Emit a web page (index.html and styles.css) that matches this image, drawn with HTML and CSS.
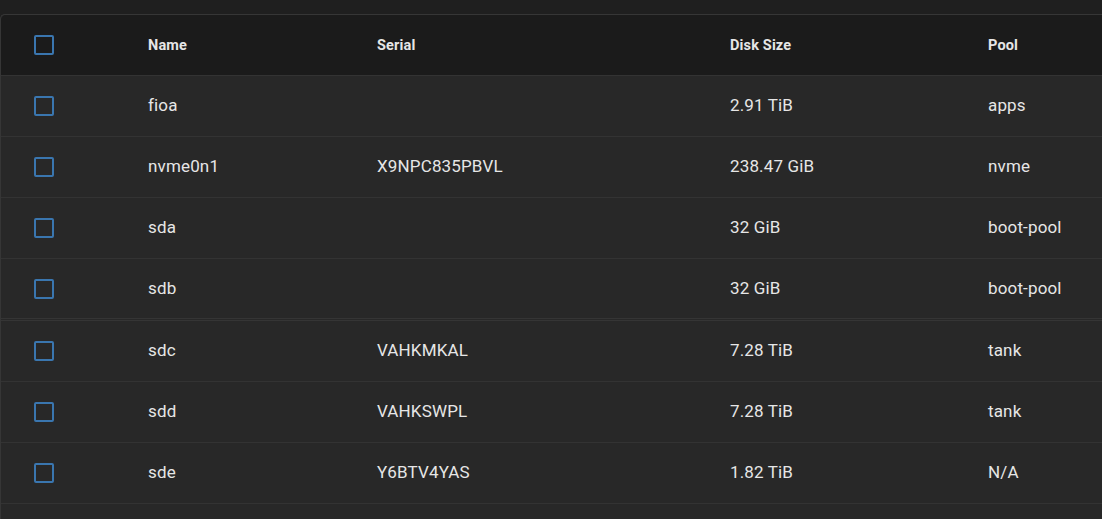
FILE: index.html
```html
<!DOCTYPE html>
<html>
<head>
<meta charset="utf-8">
<link rel="stylesheet" href="styles.css">
</head>
<body>
<div class="table">
  <div class="row head">
    <div class="cell check"><span class="box"></span></div>
    <div class="cell">Name</div>
    <div class="cell">Serial</div>
    <div class="cell">Disk Size</div>
    <div class="cell">Pool</div>
  </div>
  <div class="row">
    <div class="cell check"><span class="box"></span></div>
    <div class="cell">fioa</div>
    <div class="cell"></div>
    <div class="cell">2.91 TiB</div>
    <div class="cell">apps</div>
  </div>
  <div class="row">
    <div class="cell check"><span class="box"></span></div>
    <div class="cell">nvme0n1</div>
    <div class="cell">X9NPC835PBVL</div>
    <div class="cell">238.47 GiB</div>
    <div class="cell">nvme</div>
  </div>
  <div class="row">
    <div class="cell check"><span class="box"></span></div>
    <div class="cell">sda</div>
    <div class="cell"></div>
    <div class="cell">32 GiB</div>
    <div class="cell">boot-pool</div>
  </div>
  <div class="row split">
    <div class="cell check"><span class="box"></span></div>
    <div class="cell">sdb</div>
    <div class="cell"></div>
    <div class="cell">32 GiB</div>
    <div class="cell">boot-pool</div>
  </div>
  <div class="row">
    <div class="cell check"><span class="box"></span></div>
    <div class="cell">sdc</div>
    <div class="cell">VAHKMKAL</div>
    <div class="cell">7.28 TiB</div>
    <div class="cell">tank</div>
  </div>
  <div class="row">
    <div class="cell check"><span class="box"></span></div>
    <div class="cell">sdd</div>
    <div class="cell">VAHKSWPL</div>
    <div class="cell">7.28 TiB</div>
    <div class="cell">tank</div>
  </div>
  <div class="row">
    <div class="cell check"><span class="box"></span></div>
    <div class="cell">sde</div>
    <div class="cell">Y6BTV4YAS</div>
    <div class="cell">1.82 TiB</div>
    <div class="cell">N/A</div>
  </div>
</div>
</body>
</html>
```
FILE: styles.css
```css
html, body {
  margin: 0;
  padding: 0;
  background: #1f1f1f;
  font-family: Roboto, "Liberation Sans", sans-serif;
  color: #e6e6e6;
  overflow: hidden;
}
.table {
  margin-top: 14px;
  border-top: 1px solid #363636;
  border-left: 1px solid #363636;
  border-radius: 5px 0 0 0;
  background: #282828;
  height: 520px;
}
.row {
  display: grid;
  grid-template-columns: 147px 229px 353px 258px 1fr;
  height: 60px;
  align-items: center;
  border-bottom: 1px solid #333333;
  font-size: 17px;
  letter-spacing: 0.15px;
}
.row > .cell {
  padding-bottom: 2px;
}
.row.head {
  background: #1b1b1b;
  font-size: 14.5px;
  font-weight: 700;
  border-radius: 5px 0 0 0;
}
.row.head > .cell {
  padding-bottom: 0;
}
.row.split {
  height: 59px;
  border-bottom: 3px double #353535;
}
.row > .cell.check {
  padding-left: 33px;
  padding-bottom: 0;
  display: flex;
  align-items: center;
}
.box {
  width: 16px;
  height: 16px;
  border: 2px solid #3a76af;
  border-radius: 2px;
}
```
